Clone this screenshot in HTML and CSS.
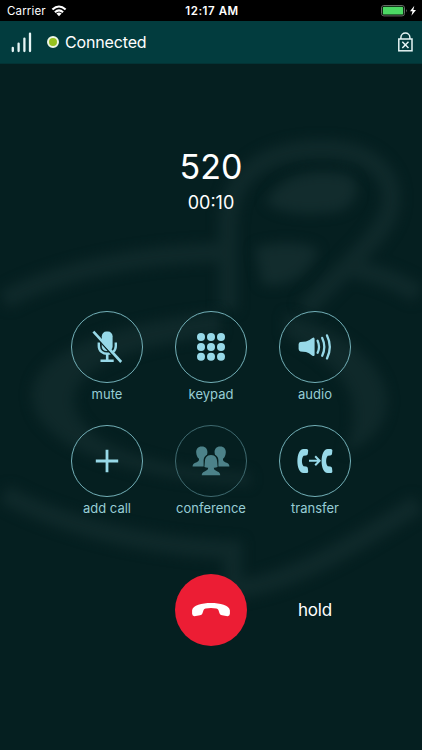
FILE: index.html
```html
<!DOCTYPE html>
<html lang="en">
  <head>
    <meta charset="UTF-8" />
    <meta name="viewport" content="width=device-width, initial-scale=1.0" />
    <title>Call</title>
    <link rel="stylesheet" href="styles.css">
  </head>
  <body>
    <!-- Blurred logo behind the call screen -->
    <svg class="backdrop" viewBox="0 0 422 750">
      <g fill="none" stroke="#0f292a" stroke-width="19">
        <path d="M228 310 V225 C228 172 270 149 322 149 C380 149 402 185 386 220 C372 245 342 270 305 310" />
        <path d="M4 300 C60 270 140 254 228 252" />
        <path d="M350 268 Q390 276 418 294" />
        <path d="M4 494 C60 524 140 546 233 550 V590 C300 582 370 534 418 504" />
      </g>
      <g fill="#0f292a">
        <path d="M220 312 C90 325 32 360 32 395 C32 440 110 478 250 485 V473 C150 470 74 440 74 400 C74 365 140 345 220 335 Z" />
        <path d="M285 314 C350 330 387 370 387 400 C387 430 365 445 345 452 C352 435 356 420 352 400 C345 370 310 350 285 335 Z" />
      </g>
      <g fill="#122c2d">
        <path d="M266 202 C280 175 310 168 345 174 C365 180 358 208 335 212 C305 216 280 214 266 202 Z" />
        <path d="M255 248 C275 240 310 242 318 250 C310 275 285 290 262 284 Z" />
      </g>
    </svg>

    <div class="phone">
      <div class="status-bar">
        <div class="carrier">
          <span>Carrier</span>
          <svg width="16" height="12" viewBox="0 0 16 12">
            <g fill="none" stroke="#fff" stroke-width="2.1">
              <path d="M1.4 4.6 Q8 -1.6 14.6 4.6" />
              <path d="M3.9 7.2 Q8 3.4 12.1 7.2" />
            </g>
            <path d="M5.4 8.6 Q8 6.6 10.6 8.6 L8 11.2 Z" fill="#fff" />
          </svg>
        </div>
        <span class="clock">12:17 AM</span>
        <div class="battery">
          <svg width="36" height="12" viewBox="0 0 36 12">
            <rect x="0.5" y="0.5" width="23" height="10.4" rx="2.4" fill="none" stroke="#666d66" />
            <rect x="1.8" y="1.8" width="20.4" height="7.8" rx="1.2" fill="#4cd964" />
            <path d="M25 4 Q26.6 5.7 25 7.6 Z" fill="#777" />
            <path d="M33.3 0.8 L29 6.2 H31.5 L30.4 10.8 L35 5 H32.3 Z" fill="#fff" />
          </svg>
        </div>
      </div>

      <header class="call-bar">
        <svg class="signal" width="22" height="22" viewBox="0 0 22 22">
          <path d="M2.8 16.8 V20 M8.6 12.6 V20 M14.4 7.6 V20 M20 2.6 V20" stroke="#e6f5f5" stroke-width="2.3" stroke-linecap="round" />
        </svg>
        <span class="dot"></span>
        <span class="state">Connected</span>
        <svg class="lock" width="16" height="22" viewBox="0 0 16 22">
          <g fill="none" stroke="#e6f5f5" stroke-width="1.5">
            <rect x="1.8" y="8" width="13.2" height="11.8" />
            <path d="M3.9 8 V6.6 C3.9 0.6 12.9 0.6 12.9 6.6 V8" />
            <path d="M5.3 10.8 L11.5 17 M11.5 10.8 L5.3 17" />
          </g>
        </svg>
      </header>

      <section class="caller">
        <h1>520</h1>
        <p>00<span class="colon">:</span>10</p>
      </section>

      <main class="actions">
        <div class="action">
          <div class="circle">
            <svg viewBox="-36 -36 72 72">
              <rect x="-5.2" y="-15.4" width="10.8" height="19.4" rx="4.6" fill="#97d9e8" />
              <path d="M-8.2 -4.5 V-1 C-8.2 9.4 8.8 9.4 8.8 -1 V-4.5" fill="none" stroke="#97d9e8" stroke-width="2.4" />
              <path d="M0.2 7 V13.5 M-6.5 13.8 H6.7" stroke="#97d9e8" stroke-width="2.6" />
              <path d="M-14.8 -14.2 L12.8 16.6" stroke="#08201f" stroke-width="1.5" />
              <path d="M-13.6 -15.4 L14.2 15" stroke="#97d9e8" stroke-width="2.6" />
            </svg>
          </div>
          <span>mute</span>
        </div>

        <div class="action">
          <div class="circle">
            <svg viewBox="-36 -36 72 72" fill="#97d9e8">
              <circle cx="-10" cy="-10" r="4" />
              <circle cx="0" cy="-10" r="4" />
              <circle cx="10" cy="-10" r="4" />
              <circle cx="-10" cy="0" r="4" />
              <circle cx="0" cy="0" r="4" />
              <circle cx="10" cy="0" r="4" />
              <circle cx="-10" cy="9.8" r="4" />
              <circle cx="0" cy="9.8" r="4" />
              <circle cx="10" cy="9.8" r="4" />
            </svg>
          </div>
          <span>keypad</span>
        </div>

        <div class="action">
          <div class="circle">
            <svg viewBox="-36 -36 72 72">
              <path d="M-14.6 -5 L-9 -5.6 Q-6 -6.2 -3 -8.8 Q-0.4 -10.4 -0.4 -7.8 V7.4 Q-0.4 10 -3 8.4 Q-6 5.6 -9 5 L-14.6 4.4 Q-16.4 4 -16.4 2 V-2.6 Q-16.4 -4.6 -14.6 -5 Z" fill="#97d9e8" />
              <g fill="none" stroke="#97d9e8" stroke-width="2.3" stroke-linecap="round">
                <path d="M2.6 -6.3 Q5.4 -0.3 2.6 5.8" />
                <path d="M7.2 -9.1 Q11.4 -0.3 7.2 8.8" />
                <path d="M12 -11.6 Q17.6 -0.3 12 11.4" />
              </g>
            </svg>
          </div>
          <span>audio</span>
        </div>

        <div class="action">
          <div class="circle">
            <svg viewBox="-36 -36 72 72">
              <path d="M0 -11.2 V11.2 M-11.2 0 H11.2" stroke="#97d9e8" stroke-width="2.8" />
            </svg>
          </div>
          <span>add call</span>
        </div>

        <div class="action disabled">
          <div class="circle">
            <svg viewBox="-36 -36 72 72">
              <defs>
                <path id="person" d="M0 -14.5 C-4 -14.5 -5.8 -11.8 -5.6 -8.4 C-5.4 -5.4 -4.4 -3.4 -2.8 -2.2 C-2.6 0.6 -4.6 1 -6.4 1.8 C-8.8 2.8 -9.2 4 -9.2 5.6 H9.2 C9.2 4 8.8 2.8 6.4 1.8 C4.6 1 2.6 0.6 2.8 -2.2 C4.4 -3.4 5.4 -5.4 5.6 -8.4 C5.8 -11.8 4 -14.5 0 -14.5 Z" />
              </defs>
              <use href="#person" x="-9.2" fill="#4c8289" />
              <use href="#person" x="9.2" fill="#4c8289" />
              <path d="M-7.4 7 V-0.5 C-7.4 -9.5 7.4 -9.5 7.4 -0.5 V7 Z" fill="#08201f" />
              <path d="M0 -6 C-4.4 -6 -6 -3 -6.1 0.5 L-6.6 6 Q-4.6 7 -2.8 6.8 C-2.8 9 -4.6 9.6 -6.4 10.4 C-8.8 11.4 -9.2 12.6 -9.2 14.3 H9.2 C9.2 12.6 8.8 11.4 6.4 10.4 C4.6 9.6 2.8 9 2.8 6.8 Q4.6 7 6.6 6 L6.1 0.5 C6 -3 4.4 -6 0 -6 Z" fill="#4c8289" />
            </svg>
          </div>
          <span>conference</span>
        </div>

        <div class="action">
          <div class="circle">
            <svg viewBox="-36 -36 72 72">
              <defs>
                <path id="handset" d="M3.6 -12 H0.5 C-7.6 -12 -7.6 12 0.5 12 H3.6 Q5.2 12 5.2 10.4 L4.8 7 Q4.6 5.6 3 5.5 L0.6 5.2 C-1.6 3 -1.6 -3 0.6 -5.2 L3 -5.5 Q4.6 -5.6 4.8 -7 L5.2 -10.4 Q5.2 -12 3.6 -12 Z" />
              </defs>
              <use href="#handset" x="-12" fill="#97d9e8" />
              <use href="#handset" x="12.2" fill="#97d9e8" />
              <path d="M-6 -0.2 H4.4 M0.2 -4.7 L4.6 -0.2 L0.2 4.3" fill="none" stroke="#97d9e8" stroke-width="2" />
            </svg>
          </div>
          <span>transfer</span>
        </div>
      </main>

      <footer class="call-footer">
        <div class="hangup">
          <svg viewBox="-36 -36 72 72">
            <path d="M-18.9 3.8 V0.2 C-17.6 -9.4 17.6 -9.4 18.9 0.2 V3.8 Q18.8 6.2 16.6 6.2 L11 5.3 Q9.2 5 8.6 3.4 L7.4 0 Q6.8 -1.3 5.4 -1.5 Q0 -2.5 -5.4 -1.5 Q-6.8 -1.3 -7.4 0 L-8.6 3.4 Q-9.2 5 -11 5.3 L-16.6 6.2 Q-18.8 6.2 -18.9 3.8 Z" fill="#fff" />
          </svg>
        </div>
        <span class="hold">hold</span>
      </footer>
    </div>
  </body>
</html>
```

FILE: styles.css
```css
* {
  margin: 0;
  padding: 0;
  box-sizing: border-box;
}

body {
  width: 422px;
  height: 750px;
  overflow: hidden;
  background-color: #051f20;
  color: #fff;
  font-family: Inter, "Liberation Sans", sans-serif;
}

svg {
  display: block;
}

/* Logo behind everything */
.backdrop {
  position: absolute;
  top: 0;
  left: 0;
  width: 422px;
  height: 750px;
}

.backdrop g {
  filter: blur(6px);
}

.phone {
  position: relative;
}

/* Status bar */
.status-bar {
  display: grid;
  grid-template-columns: 1fr auto 1fr;
  align-items: center;
  height: 21px;
  padding: 0 5px 0 7px;
  background-color: #000;
  font-size: 11.5px;
}

.carrier {
  display: flex;
  align-items: center;
  gap: 5px;
  letter-spacing: 0.15px;
}

.clock {
  font-weight: 600;
  letter-spacing: 0.55px;
}

.battery {
  display: flex;
  justify-content: flex-end;
}

/* Connection bar */
.call-bar {
  display: flex;
  align-items: center;
  height: 43px;
  padding: 0 9px 0 10px;
  background-color: #023c3e;
  border-bottom: 1px solid #033335;
}

.dot {
  width: 12px;
  height: 12px;
  margin-left: 15px;
  border: 2px solid #eef6e6;
  border-radius: 50%;
  background-color: #95c11f;
}

.state {
  margin-left: 6px;
  font-size: 16px;
  letter-spacing: -0.15px;
}

.lock {
  margin-left: auto;
}

/* Number and timer */
.caller {
  height: 247px;
  padding-top: 81px;
  text-align: center;
}

.caller h1 {
  font-size: 34px;
  font-weight: 400;
  line-height: 44px;
}

.caller p {
  padding-top: 1px;
  font-size: 18px;
  line-height: 26px;
}

.colon {
  position: relative;
  top: -1px;
}

/* Round buttons */
.actions {
  display: grid;
  grid-template-columns: repeat(3, 104px);
  grid-auto-rows: 114px;
  justify-content: center;
}

.action {
  display: flex;
  flex-direction: column;
  align-items: center;
  color: #97cdd5;
  font-size: 13px;
  line-height: 22px;
}

.circle {
  width: 72px;
  height: 72px;
  border: 1.3px solid #73b0b8;
  border-radius: 50%;
}

.circle svg {
  width: 72px;
  height: 72px;
  margin: -1px;
}

.disabled .circle {
  border-color: #3f6a70;
}

/* Hang up and hold */
.call-footer {
  display: grid;
  grid-template-columns: repeat(3, 104px);
  justify-content: center;
  align-items: center;
  justify-items: center;
  padding-top: 35px;
}

.hangup {
  grid-column: 2;
  width: 72px;
  height: 72px;
  border-radius: 50%;
  background-color: #ec1d34;
}

.hold {
  font-size: 17px;
  letter-spacing: -0.2px;
}
```
